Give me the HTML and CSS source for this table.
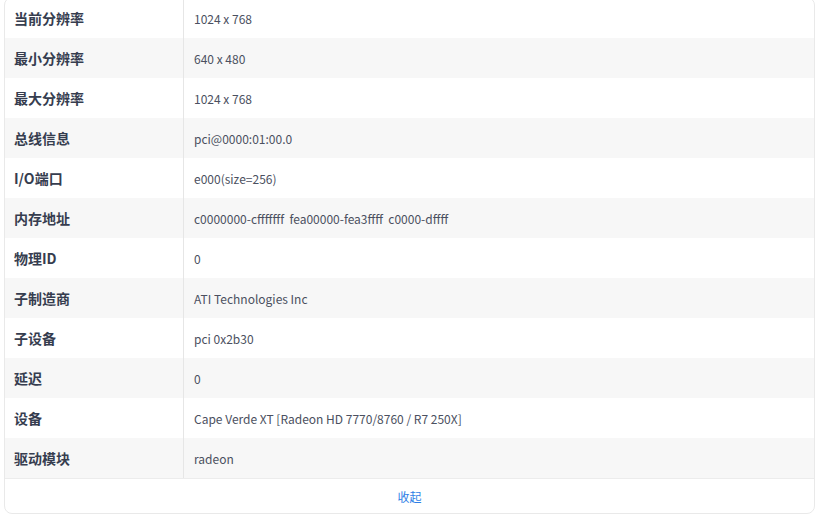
FILE: index.html
```html
<!DOCTYPE html>
<html>
<head>
    <title>显卡信息</title>
    <link rel="stylesheet" href="styles.css">
</head>
<body>
    <div class="card">
        <table class="info-table">
            <tr><th>当前分辨率</th><td>1024 x 768</td></tr>
            <tr><th>最小分辨率</th><td>640 x 480</td></tr>
            <tr><th>最大分辨率</th><td>1024 x 768</td></tr>
            <tr><th>总线信息</th><td>pci@0000:01:00.0</td></tr>
            <tr><th>I/O端口</th><td>e000(size=256)</td></tr>
            <tr><th>内存地址</th><td>c0000000-cfffffff&nbsp; fea00000-fea3ffff&nbsp; c0000-dffff</td></tr>
            <tr><th>物理ID</th><td>0</td></tr>
            <tr><th>子制造商</th><td>ATI Technologies Inc</td></tr>
            <tr><th>子设备</th><td>pci 0x2b30</td></tr>
            <tr><th>延迟</th><td>0</td></tr>
            <tr><th>设备</th><td>Cape Verde XT [Radeon HD 7770/8760 / R7 250X]</td></tr>
            <tr><th>驱动模块</th><td>radeon</td></tr>
        </table>
        <div class="card-footer">
            <a href="#" class="collapse-link">收起</a>
        </div>
    </div>
</body>
</html>
```

FILE: styles.css
```css
body {
    margin: 0;
    padding: 0 0 0 4px;
    background-color: #ffffff;
    font-family: "Noto Sans CJK SC", "Noto Sans", sans-serif;
}

.card {
    margin-top: -3px;
    border: 1px solid #e9e9e9;
    border-radius: 8px;
    overflow: hidden;
    background-color: white;
}

.info-table {
    width: 100%;
    border-collapse: collapse;
}

.info-table tr {
    height: 40px;
}

.info-table tr:nth-child(even) {
    background-color: #f7f7f7;
}

.info-table th {
    width: 169px;
    padding: 0 0 0 9px;
    text-align: left;
    font-size: 14px;
    font-weight: bold;
    color: #363d4f;
    border-right: 1px solid #e6e6e6;
}

.info-table td {
    padding: 0 10px;
    font-size: 12px;
    color: #4b5060;
}

.card-footer {
    height: 34px;
    border-top: 1px solid #ececec;
    display: flex;
    align-items: center;
    justify-content: center;
}

.collapse-link {
    font-size: 12px;
    color: #2f7fe6;
    text-decoration: none;
}
```
